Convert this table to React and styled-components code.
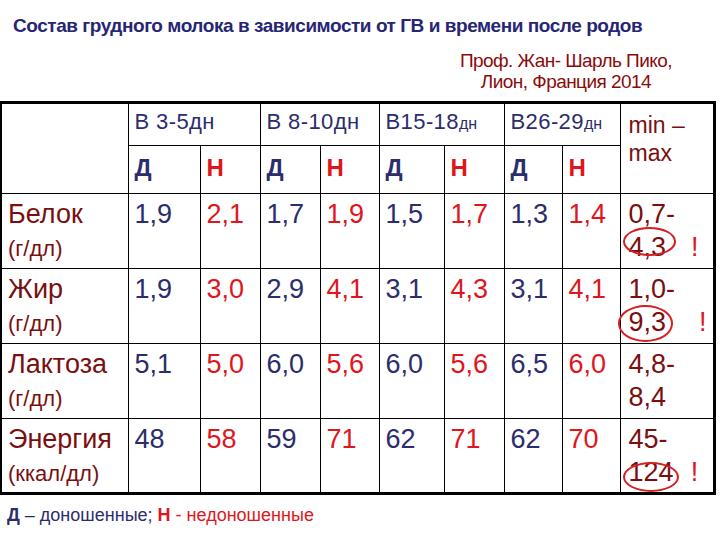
import React from 'react';
import styled, { createGlobalStyle } from 'styled-components';

const NAVY = '#2b2d6c';
const RED = '#e0161d';
const MAROON = '#7a0f10';

const GlobalStyle = createGlobalStyle`
  html, body {
    margin: 0;
    padding: 0;
    background: #fff;
  }
  body {
    font-family: "Liberation Sans", Arial, sans-serif;
  }
`;

const columns = [127, 72, 60, 60, 59, 65, 60, 58, 58, 94];

const groups = [
    { title: 'В 3-5', small: false },
    { title: 'В 8-10', small: false },
    { title: 'В15-18', small: true },
    { title: 'В26-29', small: true },
];

const rows = [
    {
        name: 'Белок',
        unit: '(г/дл)',
        values: ['1,9', '2,1', '1,7', '1,9', '1,5', '1,7', '1,3', '1,4'],
        min: '0,7-',
        max: '4,3',
        ring: '-3px -10px 9px -6px',
        bang: 25,
    },
    {
        name: 'Жир',
        unit: '(г/дл)',
        values: ['1,9', '3,0', '2,9', '4,1', '3,1', '4,3', '3,1', '4,1'],
        min: '1,0-',
        max: '9,3',
        ring: '0px -7px -2px -11px',
        bang: 33,
    },
    {
        name: 'Лактоза',
        unit: '(г/дл)',
        values: ['5,1', '5,0', '6,0', '5,6', '6,0', '5,6', '6,5', '6,0'],
        min: '4,8-',
        max: '8,4',
    },
    {
        name: 'Энергия',
        unit: '(ккал/дл)',
        values: ['48', '58', '59', '71', '62', '71', '62', '70'],
        min: '45-',
        max: '124',
        ring: '7px -5px -2px -6px',
        bang: 17,
    },
];

const App = () => {
    return (
        <Page>
            <GlobalStyle />
            <Title>Состав грудного молока в зависимости от ГВ и времени после родов</Title>
            <Author>
                <AuthorText>
                    Проф. Жан- Шарль Пико,<br />
                    Лион, Франция 2014
                </AuthorText>
            </Author>

            <Table>
                <colgroup>
                    {columns.map((w, i) => <col key={i} style={{ width: w }} />)}
                </colgroup>
                <thead>
                    <HeadRow $height={43}>
                        <HeadCell rowSpan={2} />
                        {groups.map((g) => (
                            <HeadCell key={g.title} colSpan={2}>
                                {g.title}{g.small ? <Small>дн</Small> : 'дн'}
                            </HeadCell>
                        ))}
                        <RangeHead rowSpan={2}>min – max</RangeHead>
                    </HeadRow>
                    <HeadRow $height={48}>
                        {groups.map((g) => (
                            <React.Fragment key={g.title}>
                                <KindCell $color={NAVY}>Д</KindCell>
                                <KindCell $color={RED}>Н</KindCell>
                            </React.Fragment>
                        ))}
                    </HeadRow>
                </thead>
                <tbody>
                    {rows.map((row) => (
                        <DataRow key={row.name}>
                            <Cell>
                                <Name>{row.name}</Name>
                                <Unit>{row.unit}</Unit>
                            </Cell>
                            {row.values.map((v, i) => (
                                <Cell key={i} $color={i % 2 === 0 ? NAVY : RED}>{v}</Cell>
                            ))}
                            <Cell $color={MAROON} $left={8}>
                                <Line>{row.min}</Line>
                                <SecondLine>
                                    {row.ring ? <Ringed $inset={row.ring}>{row.max}</Ringed> : row.max}
                                    {row.bang ? <Bang $gap={row.bang}>!</Bang> : null}
                                </SecondLine>
                            </Cell>
                        </DataRow>
                    ))}
                </tbody>
            </Table>

            <Footnote>
                <Strong $color={NAVY}>Д</Strong>
                <Plain $color={NAVY}> – доношенные; </Plain>
                <Strong $color={RED}>Н</Strong>
                <Plain $color={RED}> - недоношенные</Plain>
            </Footnote>
        </Page>
    );
};

export default App;

const Page = styled.div`
    width: 720px;
    height: 540px;
    box-sizing: border-box;
    padding-top: 15px;
    overflow: hidden;
`;

const Title = styled.h1`
    margin: 0 0 0 13px;
    font-size: 19px;
    line-height: 22px;
    font-weight: bold;
    color: #262673;
    letter-spacing: -0.45px;
    white-space: nowrap;
`;

const Author = styled.div`
    display: flex;
    justify-content: flex-end;
    padding-right: 48px;
    margin-top: 13px;
`;

const AuthorText = styled.p`
    margin: 0;
    text-align: center;
    font-size: 19px;
    line-height: 21px;
    letter-spacing: -0.55px;
    color: #8a0b0b;
`;

const Table = styled.table`
    margin-top: 9px;
    border-collapse: collapse;
    table-layout: fixed;
    width: 713px;
    border-top: 3px solid #000;
    border-right: 3px solid #000;
    border-bottom: 3px solid #000;
    border-left: 2px solid #000;
`;

const HeadRow = styled.tr`
    height: ${(p) => p.$height}px;
`;

const HeadCell = styled.td`
    border: 1px solid #000;
    vertical-align: top;
    padding: 6px 0 0 6px;
    font-size: 22px;
    line-height: 24px;
    letter-spacing: 0.4px;
    color: ${NAVY};
    white-space: nowrap;
`;

const Small = styled.span`
    font-size: 16px;
    letter-spacing: 0;
`;

const KindCell = styled.td`
    border: 1px solid #000;
    vertical-align: top;
    padding: 8px 0 0 6px;
    font-size: 24px;
    line-height: 28px;
    font-weight: bold;
    color: ${(p) => p.$color};
`;

const RangeHead = styled.td`
    border: 1px solid #000;
    vertical-align: top;
    padding: 7px 4px 0 8px;
    font-size: 23px;
    line-height: 28px;
    color: ${MAROON};
`;

const DataRow = styled.tr`
    height: 75px;
`;

const Cell = styled.td`
    border: 1px solid #000;
    vertical-align: top;
    padding: 4px 0 0 ${(p) => p.$left || 6}px;
    font-size: 27px;
    line-height: 32px;
    color: ${(p) => p.$color || MAROON};
    white-space: nowrap;
`;

const Name = styled.div`
    font-size: 27px;
    line-height: 32px;
`;

const Unit = styled.div`
    margin-top: 6px;
    font-size: 22px;
    line-height: 26px;
`;

const Line = styled.div`
    line-height: 32px;
`;

const SecondLine = styled.div`
    line-height: 35px;
`;

const Ringed = styled.span`
    position: relative;
    display: inline-block;

    &::after {
        content: '';
        position: absolute;
        inset: ${(p) => p.$inset};
        border: 2px solid #d42020;
        border-radius: 50%;
    }
`;

const Bang = styled.span`
    margin-left: ${(p) => p.$gap}px;
    color: ${RED};
`;

const Footnote = styled.p`
    margin: 10px 0 0 7px;
    font-size: 18px;
    line-height: 20px;
    white-space: nowrap;
`;

const Strong = styled.span`
    font-weight: bold;
    color: ${(p) => p.$color};
`;

const Plain = styled.span`
    color: ${(p) => p.$color};
`;
